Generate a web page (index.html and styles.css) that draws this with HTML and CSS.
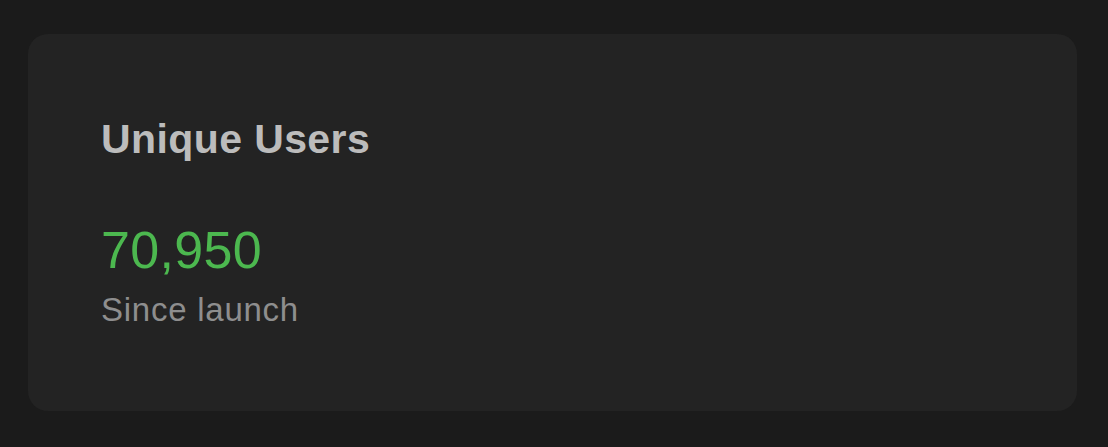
FILE: index.html
```html
<!DOCTYPE html>
<html lang="en">

<head>
    <meta charset="UTF-8">
    <meta name="viewport" content="width=device-width, initial-scale=1.0">
    <title>Unique Users</title>
    <link rel="stylesheet" href="styles.css">
</head>

<body>

    <div class="stat-card">
        <h2 class="stat-title">Unique Users</h2>
        <div class="stat-value">70,950</div>
        <div class="stat-caption">Since launch</div>
    </div>

</body>

</html>
```

FILE: styles.css
```css
html,
body {
    height: 100%;
}

body {
    margin: 0;
    box-sizing: border-box;
    padding: 34px 31px 36px 28px;
    background-color: #1b1b1b;
    font-family: 'Liberation Sans', Arial, sans-serif;
}

.stat-card {
    height: 100%;
    box-sizing: border-box;
    padding: 81px 73px 0 73px;
    background-color: #232323;
    border-radius: 20px;
    display: flex;
    flex-direction: column;
}

.stat-title {
    margin: 0;
    font-size: 41px;
    line-height: 48px;
    font-weight: bold;
    letter-spacing: 0.4px;
    color: #bcbcbc;
}

.stat-value {
    margin-top: 57px;
    font-size: 52px;
    line-height: 60px;
    letter-spacing: 0.3px;
    color: #4cb84f;
}

.stat-caption {
    margin-top: 10px;
    font-size: 33px;
    line-height: 40px;
    letter-spacing: 0.75px;
    color: #8e8e8e;
}
```
